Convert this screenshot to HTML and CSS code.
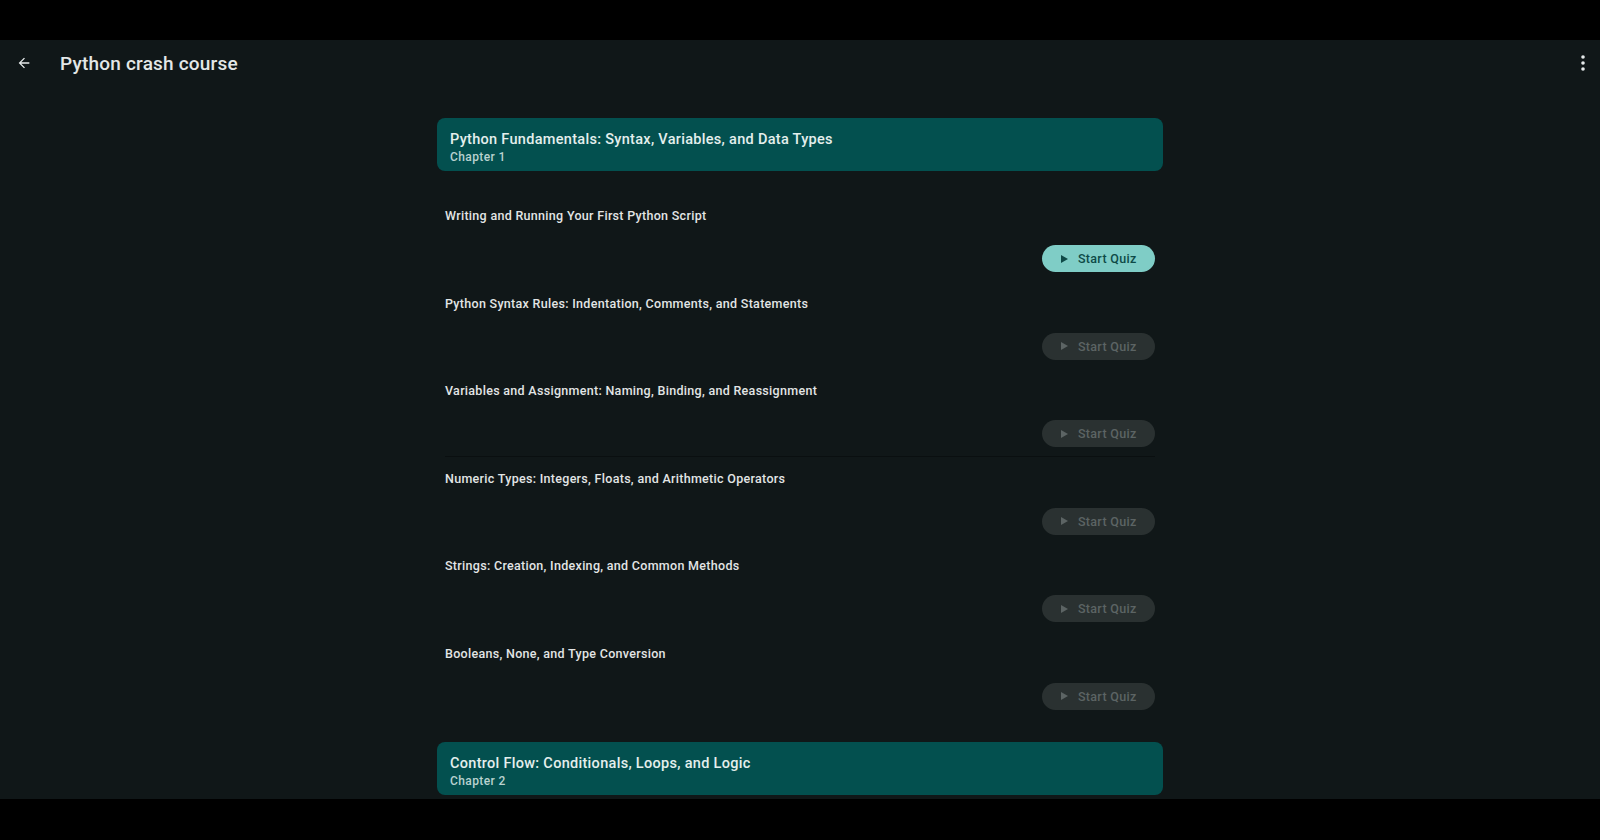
FILE: index.html
```html
<!DOCTYPE html>
<html lang="en">
  <head>
    <meta charset="UTF-8" />
    <title>Python crash course</title>
    <link rel="stylesheet" href="styles.css">
  </head>
  <body>
    <div class="screen">
      <div class="appbar">
        <button class="icon-btn back" aria-label="Back">
          <svg width="16" height="16" viewBox="0 0 24 24"><path d="M20 11H7.83l5.59-5.59L12 4l-8 8 8 8 1.41-1.41L7.83 13H20v-2z" fill="#e6eaea"/></svg>
        </button>
        <h1 class="title">Python crash course</h1>
        <button class="icon-btn more" aria-label="More">
          <svg width="6" height="18" viewBox="0 0 6 18"><circle cx="3" cy="3" r="1.8" fill="#e6eaea"/><circle cx="3" cy="9" r="1.8" fill="#e6eaea"/><circle cx="3" cy="15" r="1.8" fill="#e6eaea"/></svg>
        </button>
      </div>

      <div class="content">
        <div class="chapter">
          <div class="chapter-title">Python Fundamentals: Syntax, Variables, and Data Types</div>
          <div class="chapter-num">Chapter 1</div>
        </div>

        <div class="lessons">
          <div class="lesson">
            <div class="lesson-title">Writing and Running Your First Python Script</div>
            <button class="quiz active"><span class="play"></span>Start Quiz</button>
          </div>
          <div class="lesson">
            <div class="lesson-title">Python Syntax Rules: Indentation, Comments, and Statements</div>
            <button class="quiz"><span class="play"></span>Start Quiz</button>
          </div>
          <div class="lesson split">
            <div class="lesson-title">Variables and Assignment: Naming, Binding, and Reassignment</div>
            <button class="quiz"><span class="play"></span>Start Quiz</button>
          </div>
          <div class="lesson">
            <div class="lesson-title">Numeric Types: Integers, Floats, and Arithmetic Operators</div>
            <button class="quiz"><span class="play"></span>Start Quiz</button>
          </div>
          <div class="lesson">
            <div class="lesson-title">Strings: Creation, Indexing, and Common Methods</div>
            <button class="quiz"><span class="play"></span>Start Quiz</button>
          </div>
          <div class="lesson">
            <div class="lesson-title">Booleans, None, and Type Conversion</div>
            <button class="quiz"><span class="play"></span>Start Quiz</button>
          </div>
        </div>

        <div class="chapter">
          <div class="chapter-title">Control Flow: Conditionals, Loops, and Logic</div>
          <div class="chapter-num">Chapter 2</div>
        </div>
      </div>
    </div>
  </body>
</html>
```

FILE: styles.css
```css
body {
  margin: 0;
  background-color: #000;
  font-family: Roboto, "Noto Sans", sans-serif;
  height: 840px;
  overflow: hidden;
}
.screen {
  margin-top: 40px;
  height: 759px;
  background-color: #101718;
  overflow: hidden;
}
.appbar {
  height: 46px;
  display: flex;
  align-items: center;
}
.icon-btn {
  background: none;
  border: none;
  padding: 0;
  display: flex;
  align-items: center;
  justify-content: center;
  cursor: pointer;
}
.back {
  width: 16px;
  margin-left: 16px;
}
.title {
  flex: 1;
  margin: 0 0 0 28px;
  font-size: 19px;
  font-weight: 500;
  letter-spacing: 0.2px;
  color: #e3e7e7;
}
.more {
  width: 6px;
  margin-right: 14px;
}
.content {
  width: 726px;
  margin: 32px auto 0;
}
.chapter {
  height: 53px;
  box-sizing: border-box;
  padding: 12.5px 13px 0;
  background-color: #03504f;
  border-radius: 8px;
}
.chapter-title {
  font-size: 14.5px;
  font-weight: 500;
  line-height: 18px;
  letter-spacing: 0.3px;
  color: #e4efed;
}
.chapter-num {
  margin-top: 1.5px;
  font-size: 12px;
  font-weight: 500;
  line-height: 15px;
  letter-spacing: 0.4px;
  color: #b9d2cf;
}
.lessons {
  padding-top: 37px;
  margin-bottom: 9px;
}
.lesson {
  margin: 0 8px;
  padding-bottom: 23.5px;
  display: flex;
  flex-direction: column;
}
.lesson.split {
  padding-bottom: 8.5px;
  border-bottom: 1px solid #0a0f10;
  margin-bottom: 14px;
}
.lesson-title {
  font-size: 12.5px;
  font-weight: 500;
  line-height: 16px;
  letter-spacing: 0.3px;
  color: #e2e5e5;
  margin-bottom: 21px;
}
.quiz {
  align-self: flex-end;
  width: 113px;
  height: 27px;
  border: none;
  border-radius: 14px;
  background-color: #2a3131;
  color: #5c6464;
  font-family: inherit;
  font-size: 12.5px;
  font-weight: 500;
  letter-spacing: 0.3px;
  display: flex;
  align-items: center;
  padding: 0 0 0 19px;
  cursor: pointer;
}
.quiz.active {
  background-color: #7fcdc6;
  color: #0e4a47;
}
.play {
  width: 0;
  height: 0;
  border-top: 4px solid transparent;
  border-bottom: 4px solid transparent;
  border-left: 7px solid currentColor;
  margin-right: 10px;
}
```
